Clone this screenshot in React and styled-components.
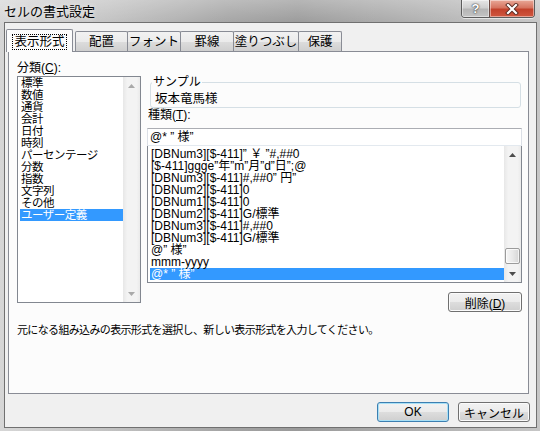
import React from 'react'
import styled, { createGlobalStyle } from 'styled-components'

const GlobalStyle = createGlobalStyle`
  html, body {
    margin: 0;
    padding: 0;
    background: #fff;
  }
  body {
    font-family: "Liberation Sans", "Noto Sans CJK JP", sans-serif;
    font-size: 12px;
    color: #000;
  }
  * { box-sizing: border-box; }
`

const categories = ['標準', '数値', '通貨', '会計', '日付', '時刻', 'パーセンテージ', '分数', '指数', '文字列', 'その他', 'ユーザー定義']

const formats = [
  '[DBNum3][$-411]” ￥ ”#,##0',
  '[$-411]ggge”年”m”月”d”日”;@',
  '[DBNum3][$-411]#,##0” 円”',
  '[DBNum2][$-411]0',
  '[DBNum1][$-411]0',
  '[DBNum2][$-411]G/標準',
  '[DBNum3][$-411]#,##0',
  '[DBNum3][$-411]G/標準',
  '@” 様”',
  'mmm-yyyy',
  '@* ” 様”',
]

const tabs = [
  { label: '表示形式', w: 67 },
  { label: '配置', w: 53 },
  { label: 'フォント', w: 54 },
  { label: '罫線', w: 54 },
  { label: '塗りつぶし', w: 66 },
  { label: '保護', w: 44 },
]

const Window = styled.div`
  width: 540px;
  height: 431px;
  display: flex;
  flex-direction: column;
  background:
    linear-gradient(180deg, rgba(255,255,255,0.28), rgba(255,255,255,0) 24px),
    linear-gradient(90deg, #d6d6d6 0%, #c2c2c2 20%, #a4a4a4 42%, #9a9a9a 55%, #b0b0b0 78%, #c6c6c6 100%);
`

const TitleBar = styled.div`
  height: 22px;
  display: flex;
  justify-content: space-between;
  align-items: flex-start;
  padding: 0 5px 0 4px;
`

const Title = styled.div`
  font-family: "Noto Sans CJK JP", sans-serif;
  font-size: 13px;
  line-height: 16px;
  padding-top: 3px;
  text-shadow: 0 0 5px rgba(255,255,255,0.9);
`

const Caption = styled.div`
  display: flex;
  border: 1px solid #5c5c5c;
  border-top: none;
  border-radius: 0 0 4px 4px;
  overflow: hidden;
  box-shadow: 0 1px 0 rgba(255,255,255,0.6);
`

const CaptionButton = styled.div`
  width: ${p => p.$w}px;
  height: 17px;
  display: flex;
  align-items: center;
  justify-content: center;
  background: ${p => p.$close
    ? 'linear-gradient(180deg, #e9a898 0%, #d67460 45%, #c2412b 55%, #d0573f 100%)'
    : 'linear-gradient(180deg, #e6e6e6 0%, #cfcfcf 45%, #b5b5b5 55%, #c4c4c4 100%)'};
  border-left: ${p => p.$close ? '1px solid #6a4a44' : 'none'};
  box-shadow: inset 0 0 0 1px rgba(255,255,255,0.45);
  color: #fff;
  font-weight: bold;
  font-size: 13px;
  text-shadow: 0 0 2px #333, 0 0 1px #333;
`

const Client = styled.div`
  flex: 1;
  margin: 0 3px 3px 4px;
  border: 1px solid #707070;
  background: #f0f0f0;
  display: flex;
  flex-direction: column;
  padding: 6px 7px 0 3px;
`

const TabStrip = styled.div`
  height: 22px;
  display: flex;
  align-items: flex-end;
  margin-left: -2px;
  position: relative;
  z-index: 1;
`

const Tab = styled.div`
  width: ${p => p.$w}px;
  height: ${p => p.$active ? 23 : 20}px;
  margin-bottom: ${p => p.$active ? -1 : 0}px;
  margin-right: ${p => p.$active ? 2 : 0}px;
  margin-left: ${p => p.$first ? 0 : -1}px;
  border: 1px solid #898c95;
  border-bottom: none;
  border-radius: 2px 2px 0 0;
  background: ${p => p.$active
    ? '#fcfcfc'
    : 'linear-gradient(180deg, #f2f2f2 0%, #ebebeb 50%, #dddddd 51%, #cfcfcf 100%)'};
  display: flex;
  align-items: center;
  justify-content: center;
  line-height: 14px;
  font-size: 12.5px;
  padding-top: ${p => p.$active ? 1 : 0}px;
`

const FocusText = styled.span`
  border: 1px dotted #000;
  padding: 0 1px;
  line-height: 14px;
`

const Panel = styled.div`
  height: 343px;
  border: 1px solid #898c95;
  background: #fcfcfc;
  padding: 9px 5px 0 8px;
  display: flex;
  flex-direction: column;
`

const Content = styled.div`
  display: grid;
  grid-template-columns: 124px 375px;
  column-gap: 6px;
`

const Column = styled.div`
  display: flex;
  flex-direction: column;
`

const Label = styled.div`
  line-height: 14px;
  height: 14px;
  padding-left: ${p => p.$indent || 0}px;
  margin-bottom: ${p => p.$mb || 0}px;
`

const ListBox = styled.div`
  height: ${p => p.$h}px;
  margin-top: ${p => p.$mt || 0}px;
  border: 1px solid #828790;
  background: #fff;
  display: flex;
`

const Items = styled.div`
  flex: 1;
  padding: ${p => p.$pt || 0}px 0 0 2px;
  font-size: ${p => p.$compact ? '11.5px' : '12px'};
  letter-spacing: ${p => p.$compact ? '-0.5px' : '0'};
`

const Item = styled.div`
  height: 12px;
  line-height: 12px;
  padding-left: 1px;
  white-space: pre;
  background: ${p => p.$selected ? '#3399ff' : 'transparent'};
  color: ${p => p.$selected ? '#fff' : '#000'};
`

const Bar = styled.div`
  width: 17px;
  display: flex;
  flex-direction: column;
  background: linear-gradient(90deg, #e7e7e7 0%, #f3f3f3 25%, #f3f3f3 80%, #eaeaea 100%);
`

const ArrowBtn = styled.div`
  height: 17px;
  display: flex;
  align-items: center;
  justify-content: center;
`

const Track = styled.div`
  flex: 1;
  display: flex;
  flex-direction: column;
  justify-content: flex-end;
`

const Thumb = styled.div`
  height: 16px;
  margin: 0 1px 1px;
  border: 1px solid #9b9b9b;
  border-radius: 2px;
  background: linear-gradient(90deg, #f6f6f6 0%, #e9e9e9 50%, #d6d6d6 100%);
  box-shadow: inset 0 0 0 1px rgba(255,255,255,0.7);
`

const GroupBox = styled.fieldset`
  margin: 14px 1px 0 3px;
  padding: 3px 4px 1px 4px;
  border: 1px solid #d5dfe5;
  border-radius: 3px;
  min-width: 0;
`

const Legend = styled.legend`
  padding: 0 1px;
  margin-left: -3px;
  line-height: 14px;
  font-size: 12px;
`

const SampleText = styled.div`
  line-height: 14px;
  font-size: 12.5px;
`

const TextBox = styled.div`
  height: 18px;
  border: 1px solid #abadb3;
  border-left-color: #dbdfe6;
  border-right-color: #dbdfe6;
  border-bottom-color: #e3e9ef;
  background: #fff;
  padding: 0 2px;
  line-height: 16px;
  white-space: pre;
  position: relative;
  z-index: 1;
`

const Button = styled.button`
  width: ${p => p.$w}px;
  height: 20px;
  padding: 0;
  font: inherit;
  font-size: 12px;
  color: #000;
  border: 1px solid ${p => p.$default ? '#3c7fb1' : '#707070'};
  border-radius: 3px;
  background: linear-gradient(180deg, #f2f2f2 0%, #ebebeb 50%, #dddddd 51%, #cfcfcf 100%);
  box-shadow: inset 0 0 0 1px ${p => p.$default ? '#a8e0f6' : '#fbfbfb'};
  justify-self: end;
  align-self: flex-end;
  margin-top: ${p => p.$mt || 0}px;
`

const Description = styled.div`
  margin-top: 11px;
  line-height: 14px;
  font-size: 11px;
  letter-spacing: -0.65px;
`

const Footer = styled.div`
  display: flex;
  justify-content: flex-end;
  gap: 9px;
  margin: 8px -1px 0 0;
`

const ArrowIcon = ({ dir, dim }) => (
  <svg width="7" height="4" viewBox="0 0 7 4">
    <polygon points={dir === 'up' ? '3.5,0 7,4 0,4' : '0,0 7,0 3.5,4'} fill={dim ? '#a9a9a9' : '#4d4d4d'} />
  </svg>
)

const CloseIcon = () => (
  <svg width="14" height="12" viewBox="0 0 14 12">
    <path d="M3 2 L11 10 M11 2 L3 10" stroke="#5a2a22" strokeWidth="4" strokeLinecap="square" />
    <path d="M3 2 L11 10 M11 2 L3 10" stroke="#fff" strokeWidth="2.2" strokeLinecap="square" />
  </svg>
)

const ScrollBar = ({ thumb, dim }) => (
  <Bar>
    <ArrowBtn><ArrowIcon dir="up" dim={dim} /></ArrowBtn>
    <Track>{thumb && <Thumb />}</Track>
    <ArrowBtn><ArrowIcon dir="down" dim={dim} /></ArrowBtn>
  </Bar>
)

export default function App() {
  return (
    <>
      <GlobalStyle />
      <Window lang="ja">
        <TitleBar>
          <Title>セルの書式設定</Title>
          <Caption>
            <CaptionButton $w={27}>?</CaptionButton>
            <CaptionButton $w={45} $close><CloseIcon /></CaptionButton>
          </Caption>
        </TitleBar>
        <Client>
          <TabStrip>
            {tabs.map((t, i) => (
              <Tab key={t.label} $w={t.w} $active={i === 0} $first={i === 0 || i === 1}>
                {i === 0 ? <FocusText>{t.label}</FocusText> : t.label}
              </Tab>
            ))}
          </TabStrip>
          <Panel>
            <Content>
              <Column>
                <Label>分類(<u>C</u>):</Label>
                <ListBox $h={227} $mt={1}>
                  <Items $compact>
                    {categories.map((c, i) => (
                      <Item key={c} $selected={i === categories.length - 1}>{c}</Item>
                    ))}
                  </Items>
                  <ScrollBar dim />
                </ListBox>
              </Column>
              <Column>
                <GroupBox>
                  <Legend>サンプル</Legend>
                  <SampleText>坂本竜馬様</SampleText>
                </GroupBox>
                <Label $indent={1} $mb={6}>種類(<u>T</u>):</Label>
                <TextBox>@* ” 様”</TextBox>
                <ListBox $h={138} $mt={-1}>
                  <Items $pt={2}>
                    {formats.map((f, i) => (
                      <Item key={f} $selected={i === formats.length - 1}>{f}</Item>
                    ))}
                  </Items>
                  <ScrollBar thumb />
                </ListBox>
                <Button $w={74} $mt={9}>削除(<u>D</u>)</Button>
              </Column>
            </Content>
            <Description>元になる組み込みの表示形式を選択し、新しい表示形式を入力してください。</Description>
          </Panel>
          <Footer>
            <Button $w={72} $default>OK</Button>
            <Button $w={72}>キャンセル</Button>
          </Footer>
        </Client>
      </Window>
    </>
  )
}
